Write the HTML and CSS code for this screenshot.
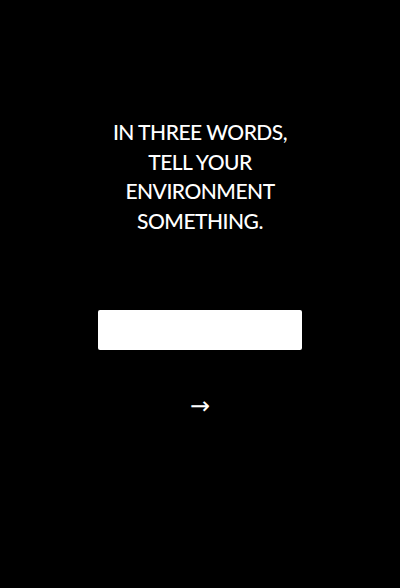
FILE: index.html
```html
<!DOCTYPE html>
<html>
<head>
<meta charset="utf-8">
<link rel="stylesheet" href="styles.css">
</head>
<body>
<main class="screen">
  <h1 class="prompt">IN THREE WORDS,<br>TELL YOUR<br>ENVIRONMENT<br>SOMETHING.</h1>
  <input class="answer" type="text" aria-label="answer">
  <button class="next" type="button">→</button>
</main>
</body>
</html>
```
FILE: styles.css
```css
html, body {
  margin: 0;
  background: #000;
}
.screen {
  width: 400px;
  height: 588px;
  display: flex;
  flex-direction: column;
  align-items: center;
  box-sizing: border-box;
  padding-top: 117px;
}
.prompt {
  margin: 0;
  color: #fff;
  font-family: Lato, sans-serif;
  font-weight: 500;
  font-size: 21px;
  line-height: 29.5px;
  text-align: center;
  letter-spacing: -0.5px;
}
.answer {
  margin-top: 75px;
  width: 204px;
  height: 40px;
  box-sizing: border-box;
  border: none;
  border-radius: 2px;
  background: #fff;
  outline: none;
  padding: 0 8px;
}
.next {
  margin-top: 41px;
  background: none;
  border: none;
  color: #fff;
  font-family: "DejaVu Sans", sans-serif;
  font-size: 24px;
  line-height: 30px;
  padding: 0;
  cursor: pointer;
}
```
